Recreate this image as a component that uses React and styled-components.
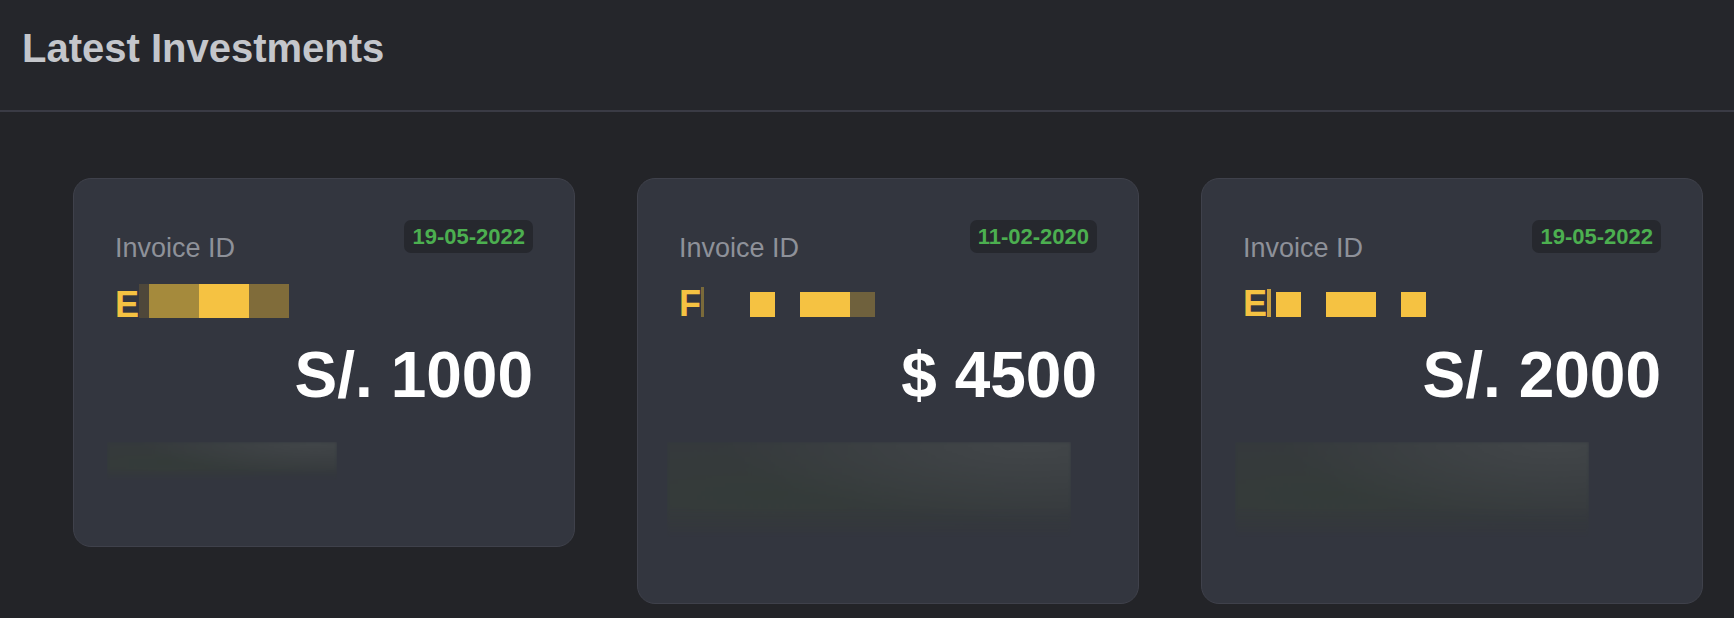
import React from 'react';
import styled, { createGlobalStyle } from 'styled-components';

const GlobalStyle = createGlobalStyle`
	html,
	body {
		margin: 0;
		padding: 0;
		background: #232428;
		font-family: 'Liberation Sans', Arial, sans-serif;
	}
	#root {
		min-height: 100vh;
	}
`;

const investments = [
	{
		date: '19-05-2022',
		letter: 'E',
		blockHeight: 34,
		blocks: [
			[10, '#4e473a'],
			[50, '#a58a3c'],
			[50, '#f5c242'],
			[40, '#806c3a'],
		],
		amount: 'S/. 1000',
		blur: { w: 230, h: 38, x: -8 },
	},
	{
		date: '11-02-2020',
		letter: 'F',
		blockHeight: 25,
		blocks: [
			[3, '#7a6a3a', 30],
			[46, 'transparent'],
			[25, '#f5c242'],
			[25, 'transparent'],
			[50, '#f5c242'],
			[25, '#6f613d'],
		],
		amount: '$ 4500',
		blur: { w: 404, h: 95, x: -12 },
	},
	{
		date: '19-05-2022',
		letter: 'E',
		blockHeight: 25,
		blocks: [
			[4, '#c9a03e', 28],
			[5, 'transparent'],
			[25, '#f5c242'],
			[25, 'transparent'],
			[50, '#f5c242'],
			[25, 'transparent'],
			[25, '#f5c242'],
		],
		amount: 'S/. 2000',
		blur: { w: 354, h: 95, x: -8 },
	},
];

export default function App() {
	return (
		<>
			<GlobalStyle />
			<Page>
				<Header>
					<Title>Latest Investments</Title>
				</Header>
				<CardList>
					{investments.map((item, i) => (
						<Card key={i}>
							<TopRow>
								<Label>Invoice ID</Label>
								<DateBadge>{item.date}</DateBadge>
							</TopRow>
							<IdRow>
								{item.letter}
								{item.blocks.map(([w, color, h], j) => (
									<Redacted key={j} $w={w} $h={h || item.blockHeight} $color={color} />
								))}
							</IdRow>
							<Amount>{item.amount}</Amount>
							<Blurred $w={item.blur.w} $h={item.blur.h} $x={item.blur.x} />
						</Card>
					))}
				</CardList>
			</Page>
		</>
	);
}

const Page = styled.div`
	min-height: 100vh;
	background: #232428;
`;

const Header = styled.div`
	background: #25262b;
	height: 112px;
	box-sizing: border-box;
	padding: 24px 22px 0;
	border-bottom: 2px solid #3a3b45;
`;

const Title = styled.h2`
	margin: 0;
	font-size: 40px;
	line-height: 48px;
	font-weight: 700;
	color: #c4c6cb;
`;

const CardList = styled.div`
	display: flex;
	align-items: flex-start;
	gap: 62px;
	padding: 66px 31px 0 73px;
`;

const Card = styled.div`
	width: 502px;
	box-sizing: border-box;
	background: #33363f;
	border: 1px solid #3f414b;
	border-radius: 18px;
	padding: 41px 41px 66px;
	display: flex;
	flex-direction: column;
`;

const TopRow = styled.div`
	display: flex;
	justify-content: space-between;
	align-items: flex-start;
`;

const Label = styled.span`
	margin-top: 12px;
	font-size: 27px;
	line-height: 32px;
	color: #8e9199;
`;

const DateBadge = styled.span`
	background: #26282e;
	border-radius: 7px;
	padding: 0 8px;
	height: 33px;
	line-height: 33px;
	font-size: 22px;
	font-weight: 700;
	color: #4caf50;
`;

const IdRow = styled.div`
	margin-top: 20px;
	height: 40px;
	font-size: 36px;
	line-height: 40px;
	font-weight: 700;
	color: #f5c242;
	white-space: nowrap;
`;

const Redacted = styled.span`
	display: inline-block;
	width: ${(props) => props.$w}px;
	height: ${(props) => props.$h}px;
	background: ${(props) => props.$color};
	vertical-align: baseline;
	margin-bottom: -1px;
`;

const Amount = styled.div`
	margin-top: 14px;
	text-align: right;
	font-size: 64px;
	line-height: 74px;
	font-weight: 700;
	color: #ffffff;
`;

const Blurred = styled.div`
	margin-top: 30px;
	margin-left: ${(props) => props.$x}px;
	width: ${(props) => props.$w}px;
	height: ${(props) => props.$h}px;
	background: radial-gradient(ellipse at 90% 0%, #424649 0%, rgba(66, 70, 73, 0) 60%),
		radial-gradient(ellipse at 25% 55%, #343b39 0%, rgba(52, 59, 57, 0) 70%), #35393c;
	filter: blur(1.5px);
	-webkit-mask-image: linear-gradient(to bottom, #000 70%, rgba(0, 0, 0, 0.1));
	mask-image: linear-gradient(to bottom, #000 70%, rgba(0, 0, 0, 0.1));
`;
